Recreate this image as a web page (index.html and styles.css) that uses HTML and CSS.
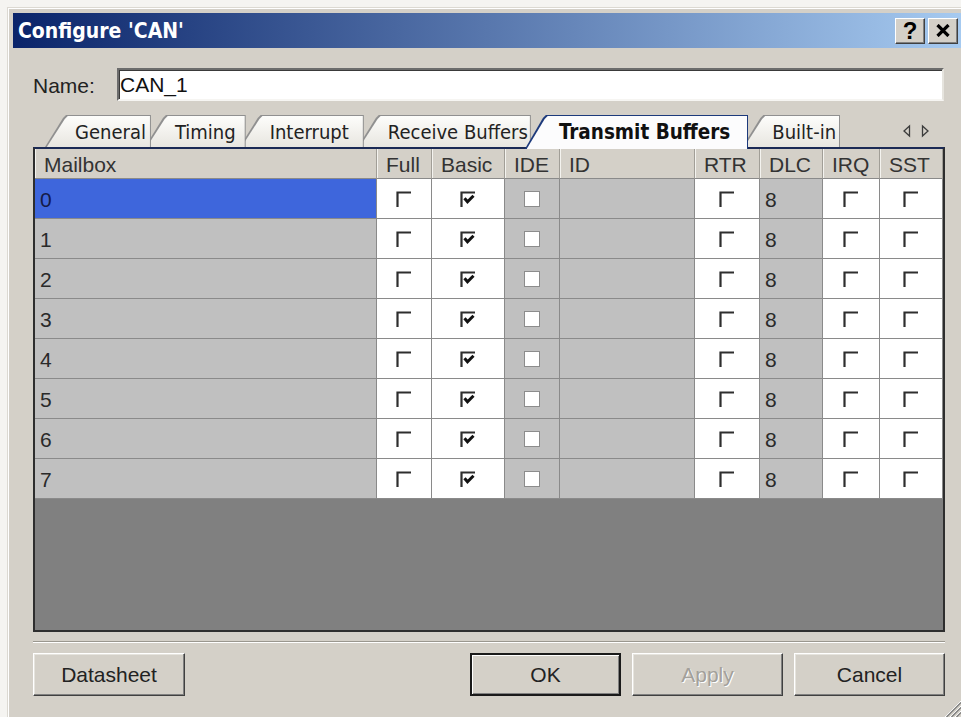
FILE: index.html
```html
<!DOCTYPE html>
<html lang="en">
<head>
<meta charset="utf-8">
<title>Configure 'CAN'</title>
<link rel="stylesheet" href="styles.css">
</head>
<body>
<svg class="defs" aria-hidden="true">
  <symbol id="ck-off" viewBox="0 0 16 16">
    <path d="M1.5 16V1.5H15" fill="none" stroke="#2e2e2e" stroke-width="2.2"/>
  </symbol>
  <symbol id="ck-on" viewBox="0 0 16 16">
    <path d="M1.5 16V1.5H15" fill="none" stroke="#2e2e2e" stroke-width="2.2"/>
    <path d="M4.5 7.2l3 3.6L13.5 4.8" fill="none" stroke="#111" stroke-width="3"/>
  </symbol>
  <symbol id="ck-dis" viewBox="0 0 16 16">
    <rect x="0.5" y="0.5" width="15" height="15" fill="#fff" stroke="#8c8c8c"/>
  </symbol>
</svg>

<div class="dialog">
  <div class="titlebar">
    <span class="title">Configure 'CAN'</span>
    <div class="caption-buttons">
      <button class="cap-btn">?</button>
      <button class="cap-btn">
        <svg width="14" height="13" viewBox="0 0 14 13"><path d="M1.5 1L12.5 12M12.5 1L1.5 12" stroke="#000" stroke-width="3.2"/></svg>
      </button>
    </div>
  </div>

  <div class="content">
    <div class="name-row">
      <span class="name-label">Name:</span>
      <div class="textbox">CAN_1</div>
    </div>

    <div class="tabbar">
      <div class="tab t1">General</div>
      <div class="tab t2">Timing</div>
      <div class="tab t3">Interrupt</div>
      <div class="tab t4">Receive Buffers</div>
      <div class="tab active">Transmit Buffers</div>
      <div class="tab t6">Built-in</div>
      <div class="tab-arrows">
        <svg width="30" height="14" viewBox="0 0 30 14">
          <path d="M8.5 2L3 7 8.5 12Z" fill="none" stroke="#3c3c3c" stroke-width="1.3"/>
          <path d="M21.5 2L27 7 21.5 12Z" fill="none" stroke="#3c3c3c" stroke-width="1.3"/>
        </svg>
      </div>
    </div>

    <div class="grid">
      <div class="row head">
        <div class="cell">Mailbox</div>
        <div class="cell">Full</div>
        <div class="cell">Basic</div>
        <div class="cell">IDE</div>
        <div class="cell">ID</div>
        <div class="cell">RTR</div>
        <div class="cell">DLC</div>
        <div class="cell">IRQ</div>
        <div class="cell">SST</div>
      </div>

      <div class="row">
        <div class="cell name sel">0</div>
        <div class="cell white"><svg class="ck"><use href="#ck-off"/></svg></div>
        <div class="cell white"><svg class="ck"><use href="#ck-on"/></svg></div>
        <div class="cell gray"><svg class="ck"><use href="#ck-dis"/></svg></div>
        <div class="cell gray"></div>
        <div class="cell white"><svg class="ck"><use href="#ck-off"/></svg></div>
        <div class="cell gray dlc">8</div>
        <div class="cell white"><svg class="ck"><use href="#ck-off"/></svg></div>
        <div class="cell white"><svg class="ck"><use href="#ck-off"/></svg></div>
      </div>
      <div class="row">
        <div class="cell name">1</div>
        <div class="cell white"><svg class="ck"><use href="#ck-off"/></svg></div>
        <div class="cell white"><svg class="ck"><use href="#ck-on"/></svg></div>
        <div class="cell gray"><svg class="ck"><use href="#ck-dis"/></svg></div>
        <div class="cell gray"></div>
        <div class="cell white"><svg class="ck"><use href="#ck-off"/></svg></div>
        <div class="cell gray dlc">8</div>
        <div class="cell white"><svg class="ck"><use href="#ck-off"/></svg></div>
        <div class="cell white"><svg class="ck"><use href="#ck-off"/></svg></div>
      </div>
      <div class="row">
        <div class="cell name">2</div>
        <div class="cell white"><svg class="ck"><use href="#ck-off"/></svg></div>
        <div class="cell white"><svg class="ck"><use href="#ck-on"/></svg></div>
        <div class="cell gray"><svg class="ck"><use href="#ck-dis"/></svg></div>
        <div class="cell gray"></div>
        <div class="cell white"><svg class="ck"><use href="#ck-off"/></svg></div>
        <div class="cell gray dlc">8</div>
        <div class="cell white"><svg class="ck"><use href="#ck-off"/></svg></div>
        <div class="cell white"><svg class="ck"><use href="#ck-off"/></svg></div>
      </div>
      <div class="row">
        <div class="cell name">3</div>
        <div class="cell white"><svg class="ck"><use href="#ck-off"/></svg></div>
        <div class="cell white"><svg class="ck"><use href="#ck-on"/></svg></div>
        <div class="cell gray"><svg class="ck"><use href="#ck-dis"/></svg></div>
        <div class="cell gray"></div>
        <div class="cell white"><svg class="ck"><use href="#ck-off"/></svg></div>
        <div class="cell gray dlc">8</div>
        <div class="cell white"><svg class="ck"><use href="#ck-off"/></svg></div>
        <div class="cell white"><svg class="ck"><use href="#ck-off"/></svg></div>
      </div>
      <div class="row">
        <div class="cell name">4</div>
        <div class="cell white"><svg class="ck"><use href="#ck-off"/></svg></div>
        <div class="cell white"><svg class="ck"><use href="#ck-on"/></svg></div>
        <div class="cell gray"><svg class="ck"><use href="#ck-dis"/></svg></div>
        <div class="cell gray"></div>
        <div class="cell white"><svg class="ck"><use href="#ck-off"/></svg></div>
        <div class="cell gray dlc">8</div>
        <div class="cell white"><svg class="ck"><use href="#ck-off"/></svg></div>
        <div class="cell white"><svg class="ck"><use href="#ck-off"/></svg></div>
      </div>
      <div class="row">
        <div class="cell name">5</div>
        <div class="cell white"><svg class="ck"><use href="#ck-off"/></svg></div>
        <div class="cell white"><svg class="ck"><use href="#ck-on"/></svg></div>
        <div class="cell gray"><svg class="ck"><use href="#ck-dis"/></svg></div>
        <div class="cell gray"></div>
        <div class="cell white"><svg class="ck"><use href="#ck-off"/></svg></div>
        <div class="cell gray dlc">8</div>
        <div class="cell white"><svg class="ck"><use href="#ck-off"/></svg></div>
        <div class="cell white"><svg class="ck"><use href="#ck-off"/></svg></div>
      </div>
      <div class="row">
        <div class="cell name">6</div>
        <div class="cell white"><svg class="ck"><use href="#ck-off"/></svg></div>
        <div class="cell white"><svg class="ck"><use href="#ck-on"/></svg></div>
        <div class="cell gray"><svg class="ck"><use href="#ck-dis"/></svg></div>
        <div class="cell gray"></div>
        <div class="cell white"><svg class="ck"><use href="#ck-off"/></svg></div>
        <div class="cell gray dlc">8</div>
        <div class="cell white"><svg class="ck"><use href="#ck-off"/></svg></div>
        <div class="cell white"><svg class="ck"><use href="#ck-off"/></svg></div>
      </div>
      <div class="row">
        <div class="cell name">7</div>
        <div class="cell white"><svg class="ck"><use href="#ck-off"/></svg></div>
        <div class="cell white"><svg class="ck"><use href="#ck-on"/></svg></div>
        <div class="cell gray"><svg class="ck"><use href="#ck-dis"/></svg></div>
        <div class="cell gray"></div>
        <div class="cell white"><svg class="ck"><use href="#ck-off"/></svg></div>
        <div class="cell gray dlc">8</div>
        <div class="cell white"><svg class="ck"><use href="#ck-off"/></svg></div>
        <div class="cell white"><svg class="ck"><use href="#ck-off"/></svg></div>
      </div>
    </div>

    <div class="sep"></div>

    <div class="buttons">
      <button class="btn">Datasheet</button>
      <div class="spacer"></div>
      <button class="btn default">OK</button>
      <button class="btn disabled">Apply</button>
      <button class="btn">Cancel</button>
    </div>
  </div>

  <svg class="grip" width="18" height="18" viewBox="0 0 18 18">
    <path d="M18 2L2 18M18 7L7 18M18 12L12 18" stroke="#fff" stroke-width="1"/>
    <path d="M18 3.5L3.5 18M18 8.5L8.5 18M18 13.5L13.5 18" stroke="#808080" stroke-width="1.4"/>
  </svg>
</div>
</body>
</html>
```

FILE: styles.css
```css
* { box-sizing: border-box; }

html, body {
  margin: 0;
  height: 100%;
  overflow: hidden;
}

body {
  background: #f5f4f1;
  font-family: "Liberation Sans", Arial, sans-serif;
  font-size: 21px;
  color: #222;
}

.defs {
  position: absolute;
  width: 0;
  height: 0;
}

/* window frame */
.dialog {
  position: relative;
  margin: 7px 0 0 7px;
  height: 710px;
  background: #d4d0c8;
  border-top: 1px solid #dcd9d2;
  border-left: 1px solid #dcd9d2;
  padding: 5px 0 0 5px;
  box-shadow: inset 1px 1px #fff;
}

.titlebar {
  height: 35px;
  display: flex;
  align-items: center;
  justify-content: space-between;
  padding: 0 3px 0 5px;
  background: linear-gradient(to right, #0a246a, #a6caf0);
}

.title {
  color: #fff;
  font-family: "DejaVu Sans Condensed", "DejaVu Sans", sans-serif;
  font-stretch: condensed;
  font-weight: bold;
  font-size: 21px;
}

.caption-buttons {
  display: flex;
  gap: 3px;
}

.cap-btn {
  width: 30px;
  height: 26px;
  padding: 0;
  display: flex;
  align-items: center;
  justify-content: center;
  background: #d4d0c8;
  border: 1px solid;
  border-color: #fff #404040 #404040 #fff;
  box-shadow: inset -1px -1px #808080;
  font: bold 24px "Liberation Sans", Arial, sans-serif;
  color: #000;
}

.content {
  padding: 20px 16px 0 20px;
}

/* name field */
.name-row {
  display: flex;
  align-items: center;
  height: 33px;
}

.name-label {
  width: 84px;
  padding-top: 3px;
}

.textbox {
  flex: 1;
  height: 33px;
  margin-right: 1px;
  display: flex;
  align-items: center;
  padding-left: 1px;
  background: #fff;
  border: 2px solid;
  border-color: #6c6c6c #e6e4de #f6f5f2 #6c6c6c;
  box-shadow: inset 1px 1px #3a3a3a;
  color: #111;
}

/* tab strip */
.tabbar {
  position: relative;
  z-index: 2;
  display: flex;
  align-items: flex-end;
  height: 32px;
  margin: 14px 0 0 12px;
}

.tab {
  position: relative;
  height: 32px;
  margin-left: -6px;
  padding: 2px 10px 0 30px;
  display: flex;
  align-items: center;
  font-family: "DejaVu Sans Condensed", "DejaVu Sans", sans-serif;
  font-stretch: condensed;
  font-size: 20px;
  color: #222;
  white-space: nowrap;
}

.tab:first-child { margin-left: 0; }

.tab::before,
.tab::after {
  content: "";
  position: absolute;
  clip-path: polygon(0 100%, 18px 3px, 21px 0, 100% 0, 100% 100%);
}

.tab::before {
  inset: 0;
  background: #909090;
  z-index: -2;
}

.tab::after {
  inset: 1px 1px 0 1.8px;
  background: linear-gradient(#fdfdfb, #e8e6e0);
  z-index: -1;
}

.t1 { z-index: 6; padding-right: 5px; }
.t2 { z-index: 5; }
.t3 { z-index: 4; padding-right: 15px; }
.t4 { z-index: 3; padding-right: 3px; }
.t6 { z-index: 1; padding-right: 4px; }

.tab.active {
  z-index: 10;
  height: 34px;
  margin-bottom: -2px;
  padding: 0 18px 0 34px;
  font-weight: bold;
  font-size: 20.5px;
  color: #111;
}

.tab.active::before { background: #1d3a7c; }
.tab.active::after {
  inset: 1px 1px 0 1.8px;
  background: #fcfcfd;
}

.tab-arrows {
  margin-left: auto;
  margin-right: 14px;
  align-self: center;
  display: flex;
}

/* mailbox table */
.grid {
  position: relative;
  z-index: 1;
  height: 485px;
  border: 2px solid #2e2e2e;
  border-top-color: #1b2a55;
  background: #808080;
}

.row {
  display: grid;
  grid-template-columns: 342px 55px 73px 55px 135px 65px 63px 57px 63px;
  height: 40px;
}

.cell {
  display: flex;
  align-items: center;
  justify-content: center;
  border-right: 1px solid #8a8a8a;
  border-bottom: 1px solid #8a8a8a;
  color: #2a2a2a;
}

.row.head {
  height: 30px;
  background: #d4d0c8;
}

.head .cell {
  justify-content: flex-start;
  padding: 3px 0 0 9px;
  border-right-color: #a19e97;
  border-bottom-color: #8a8a8a;
  box-shadow: inset 1px 0 #f4f3ef;
  color: #333;
}

.name {
  justify-content: flex-start;
  padding: 3px 0 0 5px;
  background: #c0c0c0;
}

.name.sel {
  background: #3e66dc;
  color: #141a46;
}

.white { background: #fff; }
.gray { background: #c0c0c0; }

.dlc {
  justify-content: flex-start;
  padding: 3px 0 0 5px;
}

.ck {
  width: 16px;
  height: 16px;
}

/* footer */
.sep {
  margin-top: 9px;
  height: 2px;
  border-top: 1px solid #9a978f;
  border-bottom: 1px solid #fff;
}

.buttons {
  display: flex;
  gap: 11px;
  margin-top: 10px;
}

.spacer { flex: 1; }

.btn {
  width: 151px;
  height: 43px;
  padding: 0;
  background: #d4d0c8;
  border: 1px solid;
  border-color: #fff #404040 #404040 #fff;
  box-shadow: inset -1px -1px #808080, inset 1px 1px #e6e4de;
  font: 21px "Liberation Sans", Arial, sans-serif;
  color: #222;
}

.btn:first-child { width: 152px; }

.btn.default {
  border: 2px solid #1a1a1a;
  box-shadow: inset 1px 1px #fff, inset -1px -1px #808080;
}

.btn.disabled {
  color: #a3a09a;
  text-shadow: 1px 1px #fff;
}

.grip {
  position: absolute;
  right: 0;
  bottom: 0;
}
```
